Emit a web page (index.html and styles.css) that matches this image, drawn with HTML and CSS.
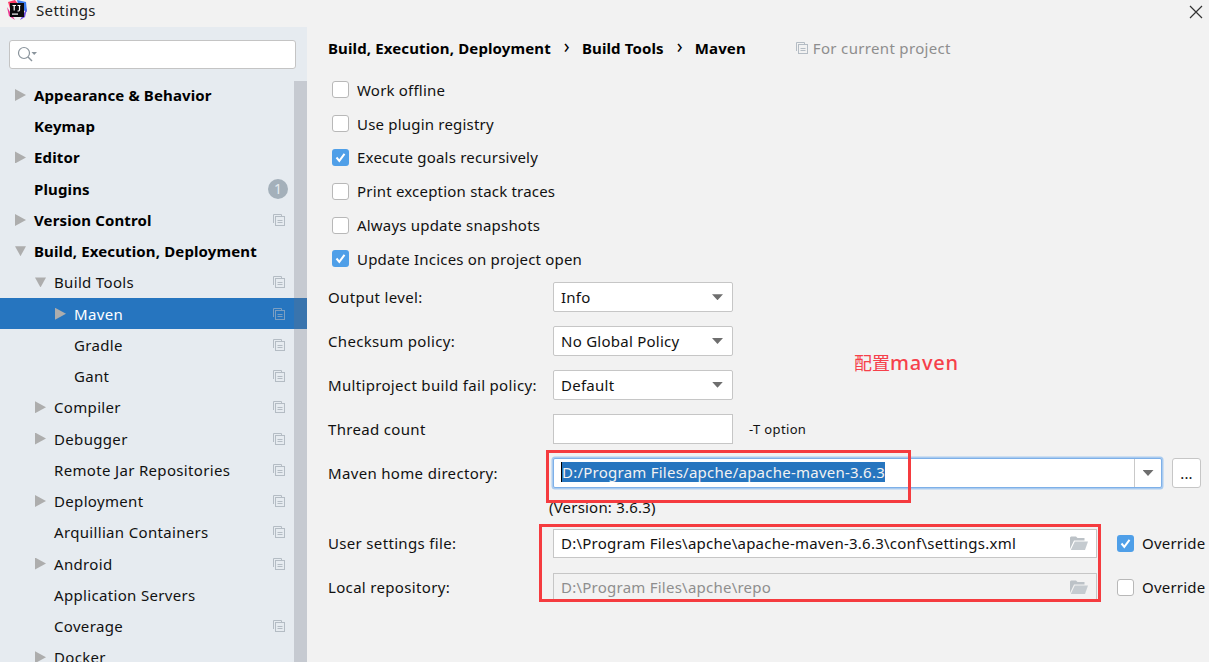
FILE: index.html
```html
<!DOCTYPE html>
<html lang="en">
<head>
<meta charset="utf-8">
<title>Settings</title>
<link rel="stylesheet" href="styles.css">
</head>
<body>
<svg class="defs" width="0" height="0" aria-hidden="true">
  <symbol id="copy" viewBox="0 0 12 12">
    <path d="M.5 9V.5H8.500V2" fill="none" stroke="#b4bcc4"/>
    <rect x="2.500" y="2.500" width="9" height="9" fill="none" stroke="#b4bcc4"/>
    <path d="M4.500 6.500h5M4.500 8.500h5" stroke="#b4bcc4"/>
  </symbol>
  <symbol id="folder" viewBox="0 0 18 14">
    <path d="M0 3V1.500L1 .5H6L7.500 2H14.500V4.500H4L0 13Z" fill="#bcc2c7"/>
    <path d="M4.800 5.500H18L15 14H.8Z" fill="#c5cbd0"/>
  </symbol>
  <symbol id="check" viewBox="0 0 17 17">
    <rect width="17" height="17" rx="3" fill="#4f9fe8"/>
    <path d="M4.500 8.500L7.300 11.800L12.500 4.800" fill="none" stroke="#fff" stroke-width="2"/>
  </symbol>
</svg>
<div class="window">
  <header class="titlebar">
    <svg class="logo" width="20" height="20" viewBox="0 0 20 20">
      <path d="M1 2L8 0L11 4L4 12Z" fill="#fc3a66"/>
      <path d="M10 0L19 2L20 12L12 8Z" fill="#3a7bf0"/>
      <path d="M0 7L8 20L2 16Z" fill="#e9358f"/>
      <path d="M13 20L20 8L18 17Z" fill="#6d4be0"/>
      <rect x="3" y="3" width="14" height="14" fill="#0b0b0e"/>
      <rect x="5" y="13.500" width="6" height="1.200" fill="#fff"/>
      <path d="M5.500 5.500H9M7.200 5.500V10.500M10.500 5.500H13.500M12.500 5.500V10L11.800 11H10.500" fill="none" stroke="#fff" stroke-width="1.200"/>
    </svg>
    <span class="title">Settings</span>
    <svg class="close" width="14" height="14" viewBox="0 0 14 14"><path d="M1 1L13 13M13 1L1 13" stroke="#333" stroke-width="1.200"/></svg>
  </header>
  <div class="content">
    <aside class="sidebar">
      <div class="search">
        <svg width="20" height="18" viewBox="0 0 20 18">
          <circle cx="7" cy="7" r="5.500" fill="none" stroke="#8a949c" stroke-width="1.200"/>
          <path d="M11 11L15 15" stroke="#8a949c" stroke-width="1.500"/>
          <path d="M14.500 6H20L17.200 9Z" fill="#8a949c"/>
        </svg>
      </div>
      <nav class="tree">
        <div class="row bold"><i class="arrow right"></i>Appearance &amp; Behavior</div>
        <div class="row bold"><i class="arrow"></i>Keymap</div>
        <div class="row bold"><i class="arrow right"></i>Editor</div>
        <div class="row bold"><i class="arrow"></i>Plugins<span class="badge">1</span></div>
        <div class="row bold"><i class="arrow right"></i>Version Control<svg class="copy"><use href="#copy"/></svg></div>
        <div class="row bold"><i class="arrow down"></i>Build, Execution, Deployment</div>
        <div class="row l1"><i class="arrow down"></i>Build Tools<svg class="copy"><use href="#copy"/></svg></div>
        <div class="row l2 selected"><i class="arrow right"></i>Maven<svg class="copy"><use href="#copy"/></svg></div>
        <div class="row l2"><i class="arrow"></i>Gradle<svg class="copy"><use href="#copy"/></svg></div>
        <div class="row l2"><i class="arrow"></i>Gant<svg class="copy"><use href="#copy"/></svg></div>
        <div class="row l1"><i class="arrow right"></i>Compiler<svg class="copy"><use href="#copy"/></svg></div>
        <div class="row l1"><i class="arrow right"></i>Debugger<svg class="copy"><use href="#copy"/></svg></div>
        <div class="row l1"><i class="arrow"></i>Remote Jar Repositories<svg class="copy"><use href="#copy"/></svg></div>
        <div class="row l1"><i class="arrow right"></i>Deployment<svg class="copy"><use href="#copy"/></svg></div>
        <div class="row l1"><i class="arrow"></i>Arquillian Containers<svg class="copy"><use href="#copy"/></svg></div>
        <div class="row l1"><i class="arrow right"></i>Android<svg class="copy"><use href="#copy"/></svg></div>
        <div class="row l1"><i class="arrow"></i>Application Servers</div>
        <div class="row l1"><i class="arrow"></i>Coverage<svg class="copy"><use href="#copy"/></svg></div>
        <div class="row l1"><i class="arrow right"></i>Docker</div>
      </nav>
      <div class="scrollbar"></div>
    </aside>
    <main class="panel">
      <div class="crumbs">
        <b>Build, Execution, Deployment</b><span class="chev">›</span><b>Build Tools</b><span class="chev">›</span><b>Maven</b>
        <span class="scope"><svg class="copy-inline"><use href="#copy"/></svg>For current project</span>
      </div>
      <div class="checks">
        <label class="check"><i class="box"></i>Work offline</label>
        <label class="check"><i class="box"></i>Use plugin registry</label>
        <label class="check"><svg class="tick"><use href="#check"/></svg>Execute goals recursively</label>
        <label class="check"><i class="box"></i>Print exception stack traces</label>
        <label class="check"><i class="box"></i>Always update snapshots</label>
        <label class="check"><svg class="tick"><use href="#check"/></svg>Update Incices on project open</label>
      </div>
      <div class="form">
        <div class="frow"><span class="flabel">Output level:</span><div class="select"><span>Info</span><i class="caret"></i></div></div>
        <div class="frow"><span class="flabel">Checksum policy:</span><div class="select"><span>No Global Policy</span><i class="caret"></i></div></div>
        <div class="frow"><span class="flabel">Multiproject build fail policy:</span><div class="select"><span>Default</span><i class="caret"></i></div></div>
        <div class="frow"><span class="flabel">Thread count</span><div class="input"></div><span class="hint">-T option</span></div>
        <div class="frow home"><span class="flabel">Maven home directory:</span>
          <div class="combo"><span class="value"><span class="sel">D:/Program Files/apche/apache-maven-3.6.3</span></span><span class="drop"><i class="caret"></i></span></div>
          <div class="more">...</div>
        </div>
        <div class="version">(Version: 3.6.3)</div>
        <div class="frow file"><span class="flabel">User settings file:</span>
          <div class="path"><span>D:\Program Files\apche\apache-maven-3.6.3\conf\settings.xml</span><svg class="folder"><use href="#folder"/></svg></div>
          <label class="override"><svg class="tick"><use href="#check"/></svg>Override</label>
        </div>
        <div class="frow file"><span class="flabel">Local repository:</span>
          <div class="path disabled"><span>D:\Program Files\apche\repo</span><svg class="folder"><use href="#folder"/></svg></div>
          <label class="override"><i class="box"></i>Override</label>
        </div>
      </div>
    </main>
  </div>
  <div class="mark mark-home"></div>
  <div class="mark mark-files"></div>
  <div class="note">配置<span class="latin">maven</span></div>
</div>
</body>
</html>
```

FILE: styles.css
```css
* { box-sizing: border-box; }
html, body { margin: 0; height: 100%; overflow: hidden; }
body { background: #f2f2f2; color: #111; font: 15px/20px "Noto Sans", "Noto Sans CJK SC", sans-serif; letter-spacing: .1px; }
.defs { position: absolute; }
.window { position: relative; width: 1209px; height: 662px; overflow: hidden; display: flex; flex-direction: column; }
.titlebar { height: 27px; flex: none; display: flex; align-items: center; padding: 0 6px 8px 7px; }
.logo { margin-right: 9px; margin-top: 1px; }
.title { color: #222; letter-spacing: .35px; }
.close { margin-left: auto; margin-top: 5px; }
.content { flex: 1; display: flex; min-height: 0; }

.sidebar { position: relative; width: 307px; flex: none; background: #e6ebf0; overflow: hidden; }
.search { height: 29px; margin: 13px 11px 0 9px; background: #fff; border: 1px solid #c4c4c4; border-radius: 3px; padding: 5px 0 0 7px; display: flex; }
.tree { margin-top: 10.400px; letter-spacing: .33px; }
.row { height: 31.240px; display: flex; align-items: center; padding-left: 15px; padding-right: 22px; white-space: nowrap; position: relative; }
.row.bold { font-weight: 700; color: #000; letter-spacing: .13px; }
.row.l1 { padding-left: 35px; }
.row.l2 { padding-left: 55px; }
.row.selected { background: #2675bf; color: #fff; }
.row.selected .copy { opacity: .6; }
.arrow { width: 11px; margin-right: 8px; flex: none; height: 12px; display: block; }
.arrow.right { background: #adadad; clip-path: polygon(0 0, 100% 50%, 0 100%); }
.arrow.down { background: #adadad; clip-path: polygon(0 0, 100% 0, 50% 100%); height: 10px; }
.copy { width: 12px; height: 12px; margin-left: auto; flex: none; }
.badge { margin-left: auto; margin-right: -3px; width: 20px; height: 20px; border-radius: 50%; background: #a4b0ba; color: #e6ebf0; font-size: 14px; font-weight: 400; text-align: center; line-height: 20px; }
.scrollbar { position: absolute; right: 0; top: 54px; bottom: 0; width: 13px; background: rgba(110, 115, 125, .27); }

.panel { flex: 1; padding: 11px 0 0 21px; min-width: 0; }
.crumbs { display: flex; align-items: center; height: 20px; color: #000; letter-spacing: .13px; }
.crumbs b { font-weight: 700; }
.chev { margin: 0 12px 0 13px; font-size: 19px; line-height: 16px; height: 20px; }
.scope { color: #8e8e8e; margin-left: 50px; display: flex; align-items: center; letter-spacing: .33px; }
.copy-inline { width: 12px; height: 12px; margin-right: 5px; }
.checks { margin-top: 15px; padding-left: 4px; letter-spacing: .2px; }
.check { display: flex; align-items: center; height: 33.800px; }
.box { display: block; width: 17px; height: 17px; flex: none; background: #fff; border: 1px solid #b8b8b8; border-radius: 3px; margin-right: 8px; }
.tick { width: 17px; height: 17px; flex: none; margin-right: 8px; }

.form { margin-top: -.5px; }
.frow { display: flex; align-items: center; height: 43.800px; }
.flabel { width: 225px; flex: none; letter-spacing: .33px; }
.select, .input { width: 180px; height: 30px; background: #fff; border: 1px solid #c6c6c6; border-radius: 2px; display: flex; align-items: center; padding: 0 7px; justify-content: space-between; letter-spacing: .25px; }
.input { border-radius: 0; }
.caret { display: block; width: 11px; height: 6px; background: #6e6e6e; clip-path: polygon(0 0, 100% 0, 50% 100%); margin-right: 2px; }
.hint { margin-left: 16px; font-size: 13px; letter-spacing: .35px; }
.frow.home { height: 46px; margin-top: -.5px; }
.combo { width: 609px; height: 30px; background: #fff; border: 1px solid #7eb0e8; box-shadow: 0 0 0 1.500px #a9cbf0; border-radius: 2px; display: flex; align-items: center; padding-left: 7px; }
.value { flex: 1; letter-spacing: .24px; margin-top: -2px; }
.sel { background: #2675bf; color: #f2f2f2; border-left: 1px solid #000; }
.drop { width: 27px; height: 100%; border-left: 1px solid #c9c9c9; display: flex; align-items: center; justify-content: center; }
.drop .caret { margin: 0; }
.more { width: 29px; height: 30px; margin-left: 10px; background: #fff; border: 1px solid #c6c6c6; border-radius: 3px; display: flex; align-items: center; justify-content: center; }
.version { height: 24px; margin-left: 221px; margin-top: 1.500px; line-height: 20px; letter-spacing: .2px; }
.frow.file { height: 44px; }
.path { width: 544px; height: 29px; background: #fff; border: 1px solid #c6c6c6; display: flex; align-items: center; padding: 0 8px 0 7px; justify-content: space-between; letter-spacing: .24px; }
.path.disabled { background: #f2f2f2; color: #8e8e8e; }
.folder { width: 18px; height: 14px; flex: none; }
.override { display: flex; align-items: center; margin-left: 20px; white-space: nowrap; letter-spacing: .2px; }

.mark { position: absolute; border: 3px solid #f53b3f; }
.mark-home { left: 546px; top: 450px; width: 365px; height: 53px; }
.mark-files { left: 539px; top: 524px; width: 562px; height: 78px; }
.note { position: absolute; left: 854px; top: 351px; color: #f6404a; font-size: 18px; line-height: 24px; letter-spacing: 0; }
.latin { font-size: 20px; font-weight: 500; letter-spacing: .8px; }
```
